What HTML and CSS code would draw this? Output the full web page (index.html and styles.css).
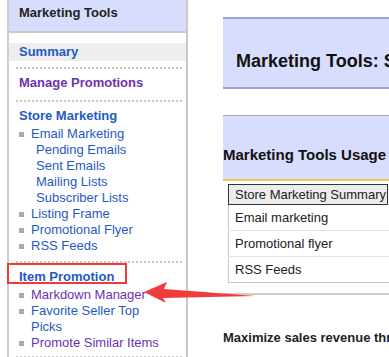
FILE: index.html
```html
<!DOCTYPE html>
<html>
<head>
  <meta charset="UTF-8">
  <meta name="viewport" content="width=device-width, initial-scale=1.0">
  <title>Marketing Tools</title>
  <link rel="stylesheet" href="styles.css">
</head>
<body>
  <div class="page">
    <div class="sidebar">
      <div class="side-head">Marketing Tools</div>
      <div class="side-summary"><a href="#" class="side-title">Summary</a></div>

      <div class="side-section">
        <a href="#" class="side-title visited">Manage Promotions</a>
      </div>

      <div class="side-section">
        <a href="#" class="side-title">Store Marketing</a>
        <ul class="side-list">
          <li>
            <a href="#">Email Marketing</a>
            <ul class="sub-list">
              <li><a href="#">Pending Emails</a></li>
              <li><a href="#">Sent Emails</a></li>
              <li><a href="#">Mailing Lists</a></li>
              <li><a href="#">Subscriber Lists</a></li>
            </ul>
          </li>
          <li><a href="#">Listing Frame</a></li>
          <li><a href="#">Promotional Flyer</a></li>
          <li><a href="#">RSS Feeds</a></li>
        </ul>
      </div>

      <div class="side-section item-promo">
        <span class="callout-box"></span>
        <a href="#" class="side-title">Item Promotion</a>
        <ul class="side-list">
          <li><a href="#" class="visited">Markdown Manager</a></li>
          <li><a href="#">Favorite Seller Top Picks</a></li>
          <li><a href="#" class="visited">Promote Similar Items</a></li>
        </ul>
      </div>
    </div>

    <div class="main">
      <div class="title-box">Marketing Tools: Summary</div>

      <div class="usage-box">Marketing Tools Usage</div>

      <table class="usage-table">
        <tr>
          <th>Store Marketing Summary</th>
          <td class="spacer"></td>
        </tr>
        <tr><td>Email marketing</td><td></td></tr>
        <tr><td>Promotional flyer</td><td></td></tr>
        <tr><td>RSS Feeds</td><td></td></tr>
      </table>

      <div class="rule"></div>

      <p class="lead">Maximize sales revenue through targeted promotions</p>
    </div>

    <!-- annotation arrow pointing at Markdown Manager -->
    <svg class="arrow" width="120" height="30" viewBox="0 0 120 30">
      <polygon points="4,13 27,3 24,10 116,17 23,19 26,24" fill="#f23b3b"/>
    </svg>
  </div>
</body>
</html>
```

FILE: styles.css
```css
html, body {
  margin: 0;
  padding: 0;
  height: 100%;
  overflow: hidden;
}
body {
  font-family: "Liberation Sans", Arial, Helvetica, sans-serif;
  font-size: 13px;
  line-height: 16px;
  color: #222;
  background: #fff;
}
a {
  color: #1f5ac4;
  text-decoration: none;
}
a.visited {
  color: #6c32b6;
}
.page {
  position: relative;
  display: flex;
  align-items: flex-start;
  padding-left: 7px;
  height: 100%;
}

/* sidebar */
.sidebar {
  flex-shrink: 0;
  width: 177px;
  min-height: 100%;
  border-left: 2px solid #cfcfcf;
  border-right: 2px solid #c8c8c8;
}
.side-head {
  background-color: #d9ddfd;
  font-weight: bold;
  padding: 5px 10px 10px;
  border-bottom: 2px solid #cacaca;
}
.side-summary {
  background-color: #eeeeee;
  margin: 10px 0 6px;
  padding: 1px 10px;
}
.side-title {
  display: block;
  font-weight: bold;
}
.side-section {
  position: relative;
  margin: 0 4px 0 7px;
  padding: 6px 0 7px 3px;
  border-top: 2px dotted #c6c6c6;
}
.side-section .side-title {
  margin-bottom: 2px;
}
.side-section:first-of-type {
  padding-bottom: 8px;
}
.item-promo {
  padding-bottom: 5px;
  border-bottom: 2px dotted #c6c6c6;
}
.side-list {
  list-style: none;
  margin: 0;
  padding: 0 12px 0 0;
}
.side-list > li {
  position: relative;
  padding-left: 12px;
}
.side-list > li::before {
  content: "";
  position: absolute;
  left: 0;
  top: 6px;
  width: 5px;
  height: 5px;
  background-color: #a9a9a9;
}
.sub-list {
  list-style: none;
  margin: 0;
  padding: 0 0 0 5px;
}
.callout-box {
  position: absolute;
  top: 0;
  left: -9px;
  width: 120px;
  height: 21px;
  box-sizing: border-box;
  border: 2px solid #f03a3a;
}
.arrow {
  position: absolute;
  left: 140px;
  top: 279px;
}

/* main content */
.main {
  flex-shrink: 0;
  width: 420px;
  margin-left: 35px;
}
.title-box {
  margin-top: 17px;
  background-color: #d9ddfd;
  border-top: 2px solid #9ea2d2;
  border-bottom: 2px solid #9ea2d2;
  padding: 33px 13px 16px;
  font-size: 18px;
  line-height: 19px;
  font-weight: bold;
  color: #111;
  white-space: nowrap;
}
.usage-box {
  margin-top: 26px;
  background-color: #d9ddfd;
  border-top: 1px solid #a8a8b8;
  border-bottom: 2px solid #f0c850;
  padding: 31px 0 16px;
  font-size: 15px;
  font-weight: bold;
  color: #111;
}
.usage-table {
  margin: 3px 0 0 5px;
  border-collapse: collapse;
  border-left: 1px solid #c8c8c8;
  border-bottom: 1px solid #c8c8c8;
}
.usage-table th {
  width: 152px;
  height: 19px;
  padding: 0 0 0 6px;
  text-align: left;
  font-weight: normal;
  background-color: #ececec;
  border: 1px solid #333;
  white-space: nowrap;
}
.usage-table td {
  height: 25px;
  padding: 0 0 0 6px;
  border-top: 1px solid #e2e2e2;
  white-space: nowrap;
}
.usage-table td.spacer {
  width: 250px;
  height: auto;
  border-top: none;
}
.rule {
  margin-top: 10px;
  height: 2px;
  background-color: #cdcdcd;
}
.lead {
  margin: 35px 0 0;
  font-weight: bold;
  white-space: nowrap;
}
```
